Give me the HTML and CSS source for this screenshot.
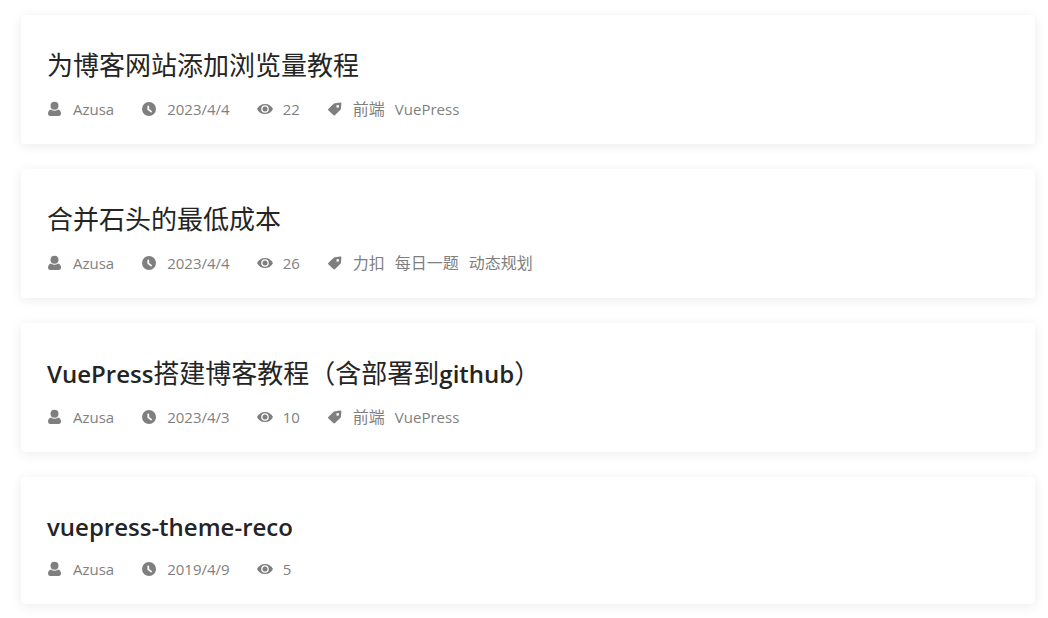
FILE: index.html
```html
<!DOCTYPE html>
<html lang="zh-CN">
<head>
<meta charset="utf-8">
<meta name="viewport" content="width=device-width, initial-scale=1">
<title>Azusa</title>
<link rel="stylesheet" href="styles.css">
</head>
<body>
<svg width="0" height="0" class="sprite" aria-hidden="true">
  <symbol id="user" viewBox="0 0 16 16"><circle cx="7.5" cy="4.7" r="4"/><path d="M4 8.4c2 1.7 5 1.7 7 0 2 .6 3 2.100 3 4.200 0 1.600-.8 2.400-2.300 2.400H3.300C1.800 15 1 14.200 1 12.600c0-2.100 1-3.600 3-4.200z"/></symbol>
  <symbol id="clock" viewBox="0 0 16 16"><path fill-rule="evenodd" d="M8 1a7 7 0 1 0 0 14A7 7 0 0 0 8 1zM7.200 4.500c.7 0 1 .3 1 .9v2.700l2.500 2c.5.5.2 1.200-.3 1.300-.3 0-.5-.1-.7-.2L7 9.300c-.4-.3-.6-.6-.6-1.100V5.300c0-.5.3-.8.8-.8z"/></symbol>
  <symbol id="eye" viewBox="0 0 16 16"><path fill-rule="evenodd" d="M8 3C11.600 3 14.700 5 16 8c-1.300 3-4.400 5-8 5S1.300 11 0 8c1.300-3 4.400-5 8-5zm0 1.200a3.800 3.800 0 1 0 0 7.600 3.800 3.800 0 0 0 0-7.600z"/><circle cx="8" cy="8" r="2.500"/></symbol>
  <symbol id="tag" viewBox="0 0 16 16"><path fill-rule="evenodd" d="M8 2.200 13.200 1.600c.8 0 1.200.4 1.200 1.200l-.5 5c-.1.500-.3.900-.7 1.300l-5.100 5c-.6.600-1.200.6-1.800 0L1.500 9.500c-.6-.6-.6-1.200 0-1.800L6.700 2.800c.4-.4.800-.5 1.300-.6zM10.700 4a1.400 1.400 0 1 0 0 2.800 1.400 1.400 0 0 0 0-2.800z"/></symbol>
</svg>
<main class="posts">
  <article class="card">
    <h2 class="title"><a href="#">为博客网站添加浏览量教程</a></h2>
    <div class="meta">
      <span class="item"><svg class="icon"><use href="#user"/></svg><span>Azusa</span></span>
      <span class="item"><svg class="icon"><use href="#clock"/></svg><time datetime="2023-04-04">2023/4/4</time></span>
      <span class="item"><svg class="icon"><use href="#eye"/></svg><span>22</span></span>
      <span class="item"><svg class="icon"><use href="#tag"/></svg><a class="cjk" href="#">前端</a><a href="#">VuePress</a></span>
    </div>
  </article>
  <article class="card">
    <h2 class="title"><a href="#">合并石头的最低成本</a></h2>
    <div class="meta">
      <span class="item"><svg class="icon"><use href="#user"/></svg><span>Azusa</span></span>
      <span class="item"><svg class="icon"><use href="#clock"/></svg><time datetime="2023-04-04">2023/4/4</time></span>
      <span class="item"><svg class="icon"><use href="#eye"/></svg><span>26</span></span>
      <span class="item"><svg class="icon"><use href="#tag"/></svg><a class="cjk" href="#">力扣</a><a class="cjk" href="#">每日一题</a><a class="cjk" href="#">动态规划</a></span>
    </div>
  </article>
  <article class="card">
    <h2 class="title"><a href="#"><span class="latin">VuePress</span>搭建博客教程（含部署到<span class="latin">github</span>）</a></h2>
    <div class="meta">
      <span class="item"><svg class="icon"><use href="#user"/></svg><span>Azusa</span></span>
      <span class="item"><svg class="icon"><use href="#clock"/></svg><time datetime="2023-04-03">2023/4/3</time></span>
      <span class="item"><svg class="icon"><use href="#eye"/></svg><span>10</span></span>
      <span class="item"><svg class="icon"><use href="#tag"/></svg><a class="cjk" href="#">前端</a><a href="#">VuePress</a></span>
    </div>
  </article>
  <article class="card">
    <h2 class="title title-latin"><a href="#"><span class="latin">vuepress-theme-reco</span></a></h2>
    <div class="meta">
      <span class="item"><svg class="icon"><use href="#user"/></svg><span>Azusa</span></span>
      <span class="item"><svg class="icon"><use href="#clock"/></svg><time datetime="2019-04-09">2019/4/9</time></span>
      <span class="item"><svg class="icon"><use href="#eye"/></svg><span>5</span></span>
    </div>
  </article>
</main>
</body>
</html>
```
FILE: styles.css
```css
* { box-sizing: border-box; }
body {
  margin: 0;
  background: #fff;
  color: #242424;
  font-family: "Open Sans", "Noto Sans CJK SC", sans-serif;
}
a { color: inherit; text-decoration: none; }
.sprite { position: absolute; }
.posts {
  display: flex;
  flex-direction: column;
  gap: 25px;
  padding: 15px 13px 15px 21px;
}
.card {
  padding: 32px 26px 23px;
  border-radius: 4px;
  background: #fff;
  box-shadow: 0 2px 12px rgba(0, 0, 0, 0.08);
}
.title {
  margin: 0 0 14px;
  font-size: 26px;
  font-weight: 400;
  line-height: 36px;
}
.title-latin { line-height: 34px; }
.latin { font-size: 24px; font-weight: 600; line-height: 1; }
.meta {
  display: flex;
  flex-wrap: wrap;
  column-gap: 27px;
  color: #7f7f7f;
  font-size: 15px;
  line-height: 24px;
}
.item { display: flex; align-items: center; gap: 10px; }
.cjk { font-size: 16px; }
.icon {
  width: 16px;
  height: 16px;
  fill: currentColor;
  overflow: visible;
}
```
